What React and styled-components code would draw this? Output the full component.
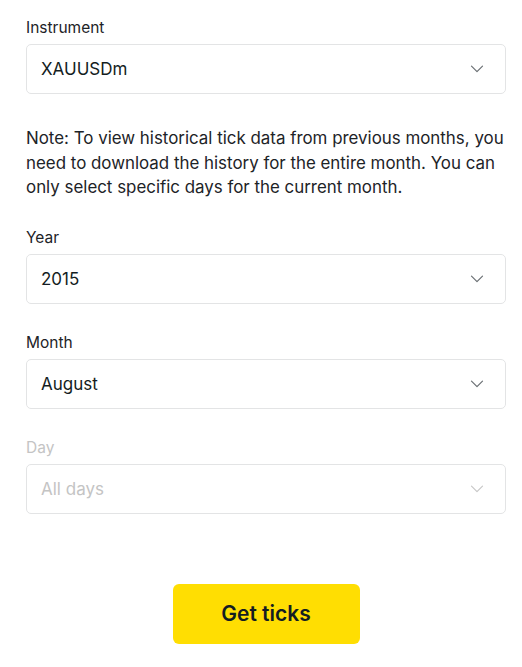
import styled, { createGlobalStyle } from "styled-components";

const GlobalStyle = createGlobalStyle`
  body {
    margin: 0;
    background: #fff;
    font-family: Inter, "Noto Sans", sans-serif;
    color: #141d22;
  }
`;

const Page = styled.div`
  width: 480px;
  padding: 18px 0 0 26px;
`;

const Field = styled.div`
  display: flex;
  flex-direction: column;
  gap: 6px;
  margin-bottom: ${({ last }) => (last ? "70px" : "29px")};
`;

const Label = styled.div`
  font-size: 15.5px;
  line-height: 20px;
  color: ${({ disabled }) => (disabled ? "#c4c4c4" : "#1d2327")};
`;

const SelectBox = styled.div`
  box-sizing: border-box;
  height: 50px;
  display: flex;
  align-items: center;
  justify-content: space-between;
  padding: 0 21px 0 14px;
  border: 1px solid #e3e4e5;
  border-radius: 5px;
  font-size: 17px;
  color: ${({ disabled }) => (disabled ? "#c4c4c4" : "#141d22")};
  cursor: ${({ disabled }) => (disabled ? "default" : "pointer")};
`;

const Note = styled.p`
  margin: 32px 0 28px;
  font-size: 16.9px;
  line-height: 24.5px;
  color: #1d2327;
`;

const Footer = styled.div`
  display: flex;
  justify-content: center;
`;

const Button = styled.button`
  width: 187px;
  height: 60px;
  border: none;
  border-radius: 6px;
  background: #ffde02;
  font-family: Inter, "Noto Sans", sans-serif;
  font-size: 21px;
  font-weight: 600;
  color: #141d22;
  cursor: pointer;
`;

function Chevron({ disabled }) {
  return (
    <svg width="14" height="8" viewBox="0 0 14 8" fill="none">
      <path
        d="M1.5 1.2l5.5 5.5 5.5-5.5"
        stroke={disabled ? "#c8c8c8" : "#6b7074"}
        strokeWidth="1.2"
        strokeLinecap="round"
        strokeLinejoin="round"
      />
    </svg>
  );
}

function Select({ label, value, disabled, last }) {
  return (
    <Field last={last}>
      <Label disabled={disabled}>{label}</Label>
      <SelectBox disabled={disabled}>
        <span>{value}</span>
        <Chevron disabled={disabled} />
      </SelectBox>
    </Field>
  );
}

export default function App() {
  return (
    <>
      <GlobalStyle />
      <Page>
        <Field>
          <Label>Instrument</Label>
          <SelectBox>
            <span>XAUUSDm</span>
            <Chevron />
          </SelectBox>
        </Field>
        <Note>
          Note: To view historical tick data from previous months, you need to
          download the history for the entire month. You can only select
          specific days for the current month.
        </Note>
        <Select label="Year" value="2015" />
        <Select label="Month" value="August" />
        <Select label="Day" value="All days" disabled last />
        <Footer>
          <Button>Get ticks</Button>
        </Footer>
      </Page>
    </>
  );
}
